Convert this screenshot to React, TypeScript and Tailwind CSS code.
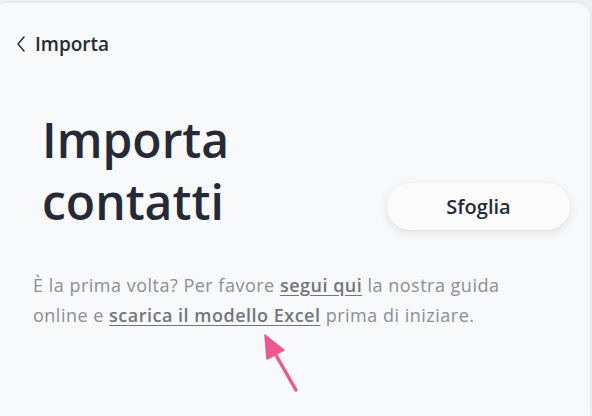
import React from "react";

export default function App() {
  return (
    <div className="w-[592px] h-[416px] bg-[#eceef1] overflow-hidden" style={{ fontFamily: '"Open Sans", "Noto Sans", sans-serif' }}>
      <div className="mt-[3px] h-[413px] w-[590px] bg-[#f8f9fa] rounded-tr-[14px] rounded-tl-[4px] shadow-[0_0_3px_rgba(0,0,0,0.06)] relative">
        <div className="flex items-center pt-[29px] pl-[16px] text-[#262a35]">
          <svg width="10" height="18" viewBox="0 0 10 18" className="mr-[9px]">
            <path d="M8 2 L2 9 L8 16" fill="none" stroke="#262a35" strokeWidth="1.5" strokeLinecap="round" strokeLinejoin="round" />
          </svg>
          <span className="text-[19px] font-semibold leading-[24px]">Importa</span>
        </div>
        <div className="flex items-start mt-[53px] pl-[42px] pr-[20px]">
          <h1 className="text-[48px] font-semibold leading-[62px] text-[#252a36]">
            Importa
            <br />
            contatti
          </h1>
          <div className="flex-1" />
          <button className="mt-[74px] w-[183px] h-[47px] rounded-full bg-[#fbfbfc] shadow-[0_3px_10px_rgba(30,40,60,0.12)] text-[20px] font-semibold text-[#262a35]">
            Sfoglia
          </button>
        </div>
        <p className="mt-[37px] pl-[33px] w-[530px] text-[18px] leading-[30px] tracking-[0.5px] text-[#8b8e96]">
          È la prima volta? Per favore{" "}
          <a className="font-semibold underline text-[#72757d] underline-offset-[3px]">segui qui</a> la nostra guida online e{" "}
          <a className="font-semibold underline text-[#72757d] underline-offset-[3px]">scarica il modello Excel</a> prima di iniziare.
        </p>
        <svg className="absolute left-[261px] top-[329px]" width="44" height="64" viewBox="0 0 44 64">
          <path d="M35 58 L12 18" stroke="#ea5990" strokeWidth="3.5" strokeLinecap="round" />
          <path d="M4 3 L23 18 L6 27 Z" fill="#ea5990" stroke="#ea5990" strokeWidth="1.5" strokeLinejoin="round" />
        </svg>
      </div>
    </div>
  );
}
